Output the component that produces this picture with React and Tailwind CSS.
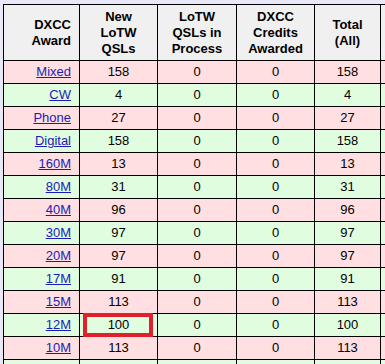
import React from 'react';

const rows = [
  ['Mixed', 158, 0, 0, 158],
  ['CW', 4, 0, 0, 4],
  ['Phone', 27, 0, 0, 27],
  ['Digital', 158, 0, 0, 158],
  ['160M', 13, 0, 0, 13],
  ['80M', 31, 0, 0, 31],
  ['40M', 96, 0, 0, 96],
  ['30M', 97, 0, 0, 97],
  ['20M', 97, 0, 0, 97],
  ['17M', 91, 0, 0, 91],
  ['15M', 113, 0, 0, 113],
  ['12M', 100, 0, 0, 100],
  ['10M', 113, 0, 0, 113],
];

function App() {
  return (
    <div className="w-[385px] h-[364px] overflow-hidden bg-[#e8e8f8] pt-[4px] pl-[3px] font-['Liberation_Sans',Arial,sans-serif] text-[13px] text-black">
      <table className="table-fixed border-collapse w-[460px]">
        <colgroup>
          <col className="w-[76px]" />
          <col className="w-[78px]" />
          <col className="w-[79px]" />
          <col className="w-[78px]" />
          <col className="w-[66px]" />
          <col className="w-[83px]" />
        </colgroup>
        <thead>
          <tr className="h-[56px] bg-[#f0f0f0] font-bold leading-[16px]">
            <th className="border border-black text-right pr-[8px] font-bold">DXCC<br />Award</th>
            <th className="border border-black text-center font-bold">New<br />LoTW<br />QSLs</th>
            <th className="border border-black text-center font-bold">LoTW<br />QSLs in<br />Process</th>
            <th className="border border-black text-center font-bold">DXCC<br />Credits<br />Awarded</th>
            <th className="border border-black text-center font-bold">Total<br />(All)</th>
            <th className="border border-black text-center font-bold">&nbsp;</th>
          </tr>
        </thead>
        <tbody>
          {rows.map((r, i) => (
            <tr key={r[0]} className={`h-[23px] ${i % 2 === 0 ? 'bg-[#ffdfe1]' : 'bg-[#e0fde0]'}`}>
              <td className="border border-black text-right pr-[8px]">
                <a href="#" className="text-[#1c1cb4] underline">{r[0]}</a>
              </td>
              <td className="border border-black text-center relative">
                {r[0] === '12M' && (
                  <div className="absolute left-[3px] right-[4px] -top-px -bottom-px border-4 border-[#e0202a]"></div>
                )}
                {r[1]}
              </td>
              <td className="border border-black text-center">{r[2]}</td>
              <td className="border border-black text-center">{r[3]}</td>
              <td className="border border-black text-center">{r[4]}</td>
              <td className="border border-black text-center">&nbsp;</td>
            </tr>
          ))}
          <tr className="h-[23px] bg-[#e0fde0]">
            <td className="border border-black">&nbsp;</td>
            <td className="border border-black">&nbsp;</td>
            <td className="border border-black">&nbsp;</td>
            <td className="border border-black">&nbsp;</td>
            <td className="border border-black">&nbsp;</td>
            <td className="border border-black">&nbsp;</td>
          </tr>
        </tbody>
      </table>
    </div>
  );
}

export default App;
